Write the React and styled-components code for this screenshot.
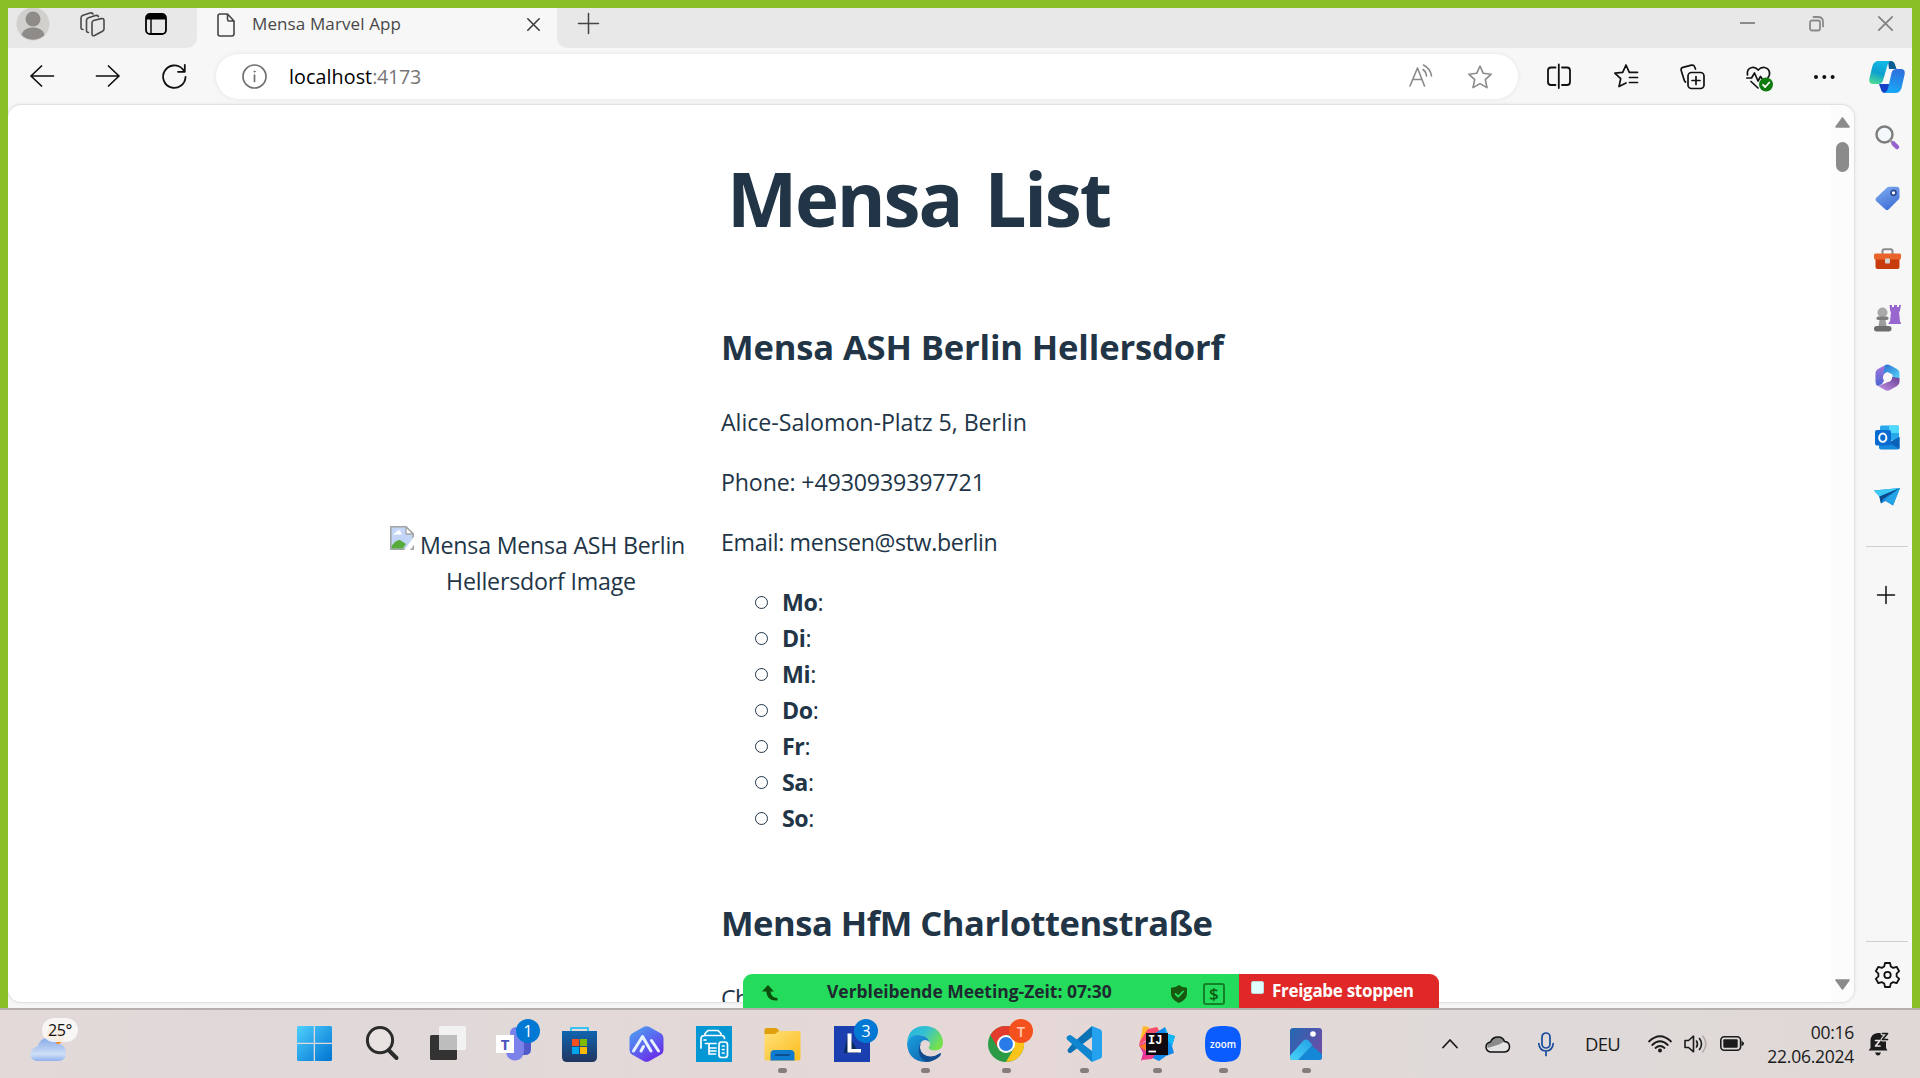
import React from "react";
import styled, { createGlobalStyle } from "styled-components";

const Global = createGlobalStyle`
  * { box-sizing: border-box; }
  html, body { margin: 0; padding: 0; overflow: hidden; }
  body { font-family: "Open Sans", "Noto Sans", sans-serif; }
  svg { display: block; overflow: visible; flex: none; }
`;

const Desktop = styled.div`
  width: 1920px;
  height: 1078px;
  display: flex;
  flex-direction: column;
  overflow: hidden;
  background: #e0d9d8;
`;
const ShareFrame = styled.div`
  position: relative;
  height: 1008px;
  flex: none;
  border: 8px solid #8bbf26;
  border-bottom: 0;
  display: flex;
  flex-direction: column;
  background: #f7f7f7;
`;
const TitleBar = styled.div`
  height: 40px;
  flex: none;
  display: flex;
  background: #f7f7f7;
`;
const TitleLeft = styled.div`
  width: 189px;
  background: #e8e8e8;
  border-bottom-right-radius: 10px;
  display: flex;
  align-items: flex-start;
  overflow: hidden;
`;
const Tab = styled.div`
  width: 360px;
  display: flex;
  align-items: flex-start;
`;
const TitleRight = styled.div`
  flex: 1;
  background: #e8e8e8;
  border-bottom-left-radius: 10px;
  display: flex;
  align-items: flex-start;
`;
const Slot = styled.div`
  margin-left: ${(p) => p.$left || 0}px;
  margin-top: ${(p) => p.$top || 0}px;
  margin-right: ${(p) => p.$right || 0}px;
  flex: none;
`;
const Label = styled.span`
  flex: none;
  display: block;
  white-space: pre;
  font-size: ${(p) => p.$size}px;
  line-height: ${(p) => p.$lh}px;
  font-weight: ${(p) => p.$weight || 400};
  letter-spacing: ${(p) => p.$ls || 0}px;
  color: ${(p) => p.$color || "#1b1b1b"};
  margin-left: ${(p) => p.$left || 0}px;
  margin-top: ${(p) => p.$top || 0}px;
`;
const ToolBar = styled.div`
  height: 57px;
  flex: none;
  display: flex;
  align-items: flex-start;
`;
const AddressBar = styled.div`
  margin: 6px 0 0 29px;
  width: 1302px;
  height: 45px;
  flex: none;
  border-radius: 23px;
  background: #fff;
  box-shadow: 0 0 5px rgba(0, 0, 0, 0.08);
  display: flex;
  align-items: flex-start;
`;
const Body = styled.div`
  flex: 1;
  min-height: 0;
  display: flex;
  overflow-x: clip;
`;
const WebView = styled.div`
  width: 1846px;
  height: 897px;
  flex: none;
  background: #fff;
  border-radius: 13px;
  box-shadow: 0 0 0 1px #e2e2e2, 0 0 4px rgba(0, 0, 0, 0.12);
  display: flex;
  overflow: hidden;
`;
const Page = styled.div`
  flex: 1;
  height: 897px;
  padding-top: 51px;
  overflow: hidden;
  color: #213547;
`;
const ScrollTrack = styled.div`
  width: 23px;
  background: #fcfcfc;
  display: flex;
  flex-direction: column;
  align-items: center;
  padding: 12px 0 12px;
`;
const Thumb = styled.div`
  width: 13px;
  height: 30px;
  border-radius: 7px;
  background: #8b8b8b;
  margin: 14px 0 auto;
`;
const PageTitle = styled.h1`
  margin: 0 0 80px 719px;
  font-size: 74.5px;
  line-height: 84px;
  font-weight: 700;
  letter-spacing: -2.2px;
  word-spacing: 6px;
  white-space: nowrap;
`;
const Item = styled.div`
  display: grid;
  grid-template-columns: 295px 800px;
  column-gap: 36px;
  padding-left: 382px;
  align-items: start;
  margin-bottom: 60px;
`;
const Missing = styled.div`
  padding-top: ${(p) => p.$top}px;
  display: flex;
  flex-direction: column;
  align-items: center;
`;
const MissingLine = styled.div`
  display: flex;
  align-items: flex-start;
  height: 36px;
  padding-left: ${(p) => p.$pad || 0}px;
`;
const MensaName = styled.h2`
  margin: 0 0 30px;
  font-size: 34.6px;
  line-height: 54px;
  font-weight: 700;
  letter-spacing: ${(p) => p.$ls}px;
  white-space: nowrap;
`;
const Line = styled.p`
  margin: 0 0 24px;
  font-size: 23.2px;
  line-height: 36px;
  letter-spacing: ${(p) => p.$ls}px;
  white-space: nowrap;
`;
const Days = styled.ul`
  margin: 0;
  padding: 0 0 0 34px;
  list-style: none;
`;
const Day = styled.li`
  display: flex;
  align-items: center;
  height: 36px;
  font-size: 23.2px;
  line-height: 36px;
  letter-spacing: -0.4px;
  &::before {
    content: "";
    width: 11px;
    height: 11px;
    border: 1px solid #213547;
    border-radius: 50%;
    margin-right: 14px;
  }
`;
const Sidebar = styled.div`
  flex: 1;
  display: flex;
  flex-direction: column;
  align-items: center;
  padding: 19px 0 0 8px;
`;
const SideIcon = styled.div`
  height: 26px;
  margin-bottom: ${(p) => p.$gap}px;
  display: flex;
  align-items: center;
  justify-content: center;
`;
const Divider = styled.div`
  width: 42px;
  height: 1px;
  flex: none;
  background: #cfcfcf;
`;
const ShareBanner = styled.div`
  position: absolute;
  left: 735px;
  bottom: 0;
  width: 696px;
  height: 34px;
  display: flex;
  border-radius: 9px 9px 0 0;
  overflow: hidden;
`;
const BannerPart = styled.div`
  width: ${(p) => p.$w}px;
  background: ${(p) => p.$bg};
  display: flex;
  align-items: flex-start;
`;
const CheckBox = styled.div`
  width: 13px;
  height: 13px;
  border-radius: 2px;
  background: #dffcff;
  border: 1px solid #bfd9dc;
  margin: 7px 0 0 12px;
`;
const TaskBar = styled.div`
  height: 70px;
  flex: none;
  border-top: 2px solid #b5afae;
  background: linear-gradient(90deg, #e2d9d8 0%, #e0d8d9 18%, #e2d9d8 30%, #e6d8d6 48%, #e4d8d6 60%, #dfdad9 76%, #dfd8d7 100%);
  display: flex;
  align-items: flex-start;
`;
const TaskItem = styled.div`
  position: relative;
  flex: none;
  width: ${(p) => p.$w || 36}px;
  height: 62px;
  padding-top: 16px;
  margin-left: ${(p) => p.$left || 0}px;
  display: flex;
  flex-direction: column;
  align-items: center;
  &::after {
    content: "";
    display: ${(p) => (p.$open ? "block" : "none")};
    width: 9px;
    height: 5px;
    border-radius: 3px;
    background: #857d7c;
    margin-top: 6px;
    flex: none;
  }
`;
const Badge = styled.span`
  position: absolute;
  top: 9px;
  left: ${(p) => p.$x}px;
  width: 24px;
  height: 24px;
  border-radius: 50%;
  background: ${(p) => p.$bg || "#0078d4"};
  color: ${(p) => p.$fg || "#fff"};
  font-size: ${(p) => p.$size || 16.5}px;
  font-weight: ${(p) => p.$weight || 400};
  line-height: 24px;
  text-align: center;
`;
const Weather = styled.div`
  width: 48px;
  height: 62px;
  margin-left: 30px;
  padding-top: 8px;
  position: relative;
  flex: none;
`;
const Temp = styled.span`
  position: absolute;
  left: 12px;
  top: 8px;
  width: 36px;
  height: 24px;
  border-radius: 12px;
  background: rgba(250, 248, 248, 0.9);
  font-size: 16px;
  line-height: 25px;
  text-align: center;
  letter-spacing: -0.4px;
  color: #111;
`;
const Clock = styled.div`
  width: 110px;
  margin-top: 10px;
  display: flex;
  flex-direction: column;
  align-items: flex-end;
`;

/* line icons */
const Svg = ({ w, h = w, vb, children, ...r }) => (
  <svg width={w} height={h} viewBox={vb || `0 0 ${w} ${h}`} fill="none" strokeLinecap="round" strokeLinejoin="round" {...r}>
    {children}
  </svg>
);
const Avatar = () => (
  <Svg w={34}>
    <circle cx="17" cy="17" r="16.5" fill="#d2d0cd" />
    <circle cx="17" cy="12" r="7.5" fill="#8e8b88" />
    <path d="M5.5 28C7 22.5 11.5 20.5 17 20.5S27 22.5 28.500 28A16.500 16.500 0 0 1 5.500 28Z" fill="#8e8b88" />
  </Svg>
);
const Workspaces = () => (
  <Svg w={25} stroke="#4a4a4a" strokeWidth="1.6">
    <path d="M13.500 8.500L21 6.600Q24 6 24 8.500V17Q24 18.500 22.500 19.200L14.500 23.500Q12 24.300 12 22V11Q12 9 13.500 8.500Z" />
    <path d="M8.500 20.500Q6.500 20.500 6.500 18.500V8.500Q6.500 6.500 8.500 5.800L15.500 3.500Q17.500 3 18.500 4.500" />
    <path d="M3 17.500Q1 17.500 1 15.500V6Q1 4 3 3.300L10 1Q12 .5 13 2" />
  </Svg>
);
const TabActions = () => (
  <Svg w={22}>
    <rect x="1" y="1" width="20" height="20" rx="4" stroke="#000" strokeWidth="1.8" />
    <path d="M1 6.500V4.500Q1 1 4.500 1H17.500Q21 1 21 4.500V6.500Z" fill="#000" />
    <path d="M6 6V21" stroke="#000" strokeWidth="1.4" />
  </Svg>
);
const Doc = () => (
  <Svg w={18} h={24} stroke="#444" strokeWidth="1.6">
    <path d="M3 1H10.500L17 8V20.500Q17 23 15 23H3Q1 23 1 21V3Q1 1 3 1ZM10.500 1V6.500Q10.500 8 12 8H17" />
  </Svg>
);
const Cross = ({ s, c, sw }) => (
  <Svg w={s} stroke={c} strokeWidth={sw}>
    <path d={`M.8 .8L${s - 0.8} ${s - 0.8}M${s - 0.8} .8L.8 ${s - 0.8}`} />
  </Svg>
);
const Plus = ({ s, c }) => (
  <Svg w={s} stroke={c} strokeWidth="1.5">
    <path d={`M${s / 2} .5V${s - 0.5}M.5 ${s / 2}H${s - 0.5}`} />
  </Svg>
);
const Arrow = ({ flip }) => (
  <Svg w={24} h={22} stroke="#111" strokeWidth="1.7">
    <path d={flip ? "M12.500 1L23 11L12.500 21M23 11H.5" : "M11.500 1L1 11L11.500 21M1 11H23.500"} />
  </Svg>
);
const Reload = () => (
  <Svg w={25} h={25} stroke="#111" strokeWidth="1.8">
    <path d="M23.500 13A11.200 11.200 0 1 1 20.500 5L22.500 7.500M22.800 1V7.800H16" />
  </Svg>
);
const Info = () => (
  <Svg w={25} stroke="#707070" strokeWidth="1.7">
    <circle cx="12.500" cy="12.500" r="11.500" />
    <path d="M12.500 11V17.500" />
    <circle cx="12.500" cy="7.600" r=".6" fill="#707070" strokeWidth="1" />
  </Svg>
);
const ReadAloud = () => (
  <Svg w={24} h={23} stroke="#8a8a8a" strokeWidth="1.6">
    <path d="M1 22L8.500 4L15.500 22M3.500 15.500H13" />
    <path d="M14 5.500Q17 7.500 17.500 12M14.500 1Q21.500 4.500 22.500 12" />
  </Svg>
);
const Star = ({ c }) => (
  <Svg w={24} stroke={c} strokeWidth="1.6">
    <path d="M12 1L15.300 8.300L23.200 9.200L17.300 14.600L19 22.600L12 18.600L5 22.600L6.700 14.600L.8 9.200L8.700 8.300Z" />
  </Svg>
);
const Split = () => (
  <Svg w={24} stroke="#111" strokeWidth="1.8">
    <path d="M8.500 3.500H4Q1 3.500 1 6.500V18Q1 21 4 21H8.500M15 3.500H20Q23 3.500 23 6.500V18Q23 21 20 21H15M11.800 .5V24" />
  </Svg>
);
const Favorites = () => (
  <Svg w={25} h={24} stroke="#111" strokeWidth="1.7">
    <path d="M12 19L5 22.600L6.700 14.600L.8 9.200L8.700 8.300L12 1L15.300 8.300H23.500M15.500 13.500H23.500M15.500 18.500H23.500" />
  </Svg>
);
const Collections = () => (
  <Svg w={25} h={25} stroke="#111" strokeWidth="1.7">
    <rect x="8" y="8.500" width="16" height="16" rx="3.500" />
    <path d="M16 12.500V20.500M12 16.500H20M15.500 5L14.600 2.800Q13.800 .7 11.500 1.200L3 3.300Q.6 4 1.200 6.500L4 15.500Q4.500 17.500 5.500 18" />
  </Svg>
);
const Heart = () => (
  <Svg w={27} h={26} stroke="#111" strokeWidth="1.7">
    <path d="M1.500 9Q.5 2.500 6 1.500Q9.500 1 12.200 4Q15 1 18.500 1.500Q24 2.500 23.500 8.500Q23.300 10 22 11.500M.8 12H5.500L8.500 7L12 15L14.500 10.500L16 12.500M5 15.500L12 22" />
    <circle cx="20" cy="18.500" r="7" fill="#107c10" stroke="none" />
    <path d="M17 18.800L19.200 21L23.300 16.500" stroke="#fff" strokeWidth="1.8" />
  </Svg>
);
const Dots = () => (
  <Svg w={21} h={4}>
    <g fill="#111"><circle cx="2" cy="2" r="2" /><circle cx="10.300" cy="2" r="2" /><circle cx="18.600" cy="2" r="2" /></g>
  </Svg>
);
const Copilot = () => (
  <Svg w={36} h={33}>
    <defs>
      <linearGradient id="cpA" x1="0.500" y1="0" x2="0.200" y2="1"><stop offset="0" stopColor="#12b9e6" /><stop offset=".5" stopColor="#0c9fd0" /><stop offset="1" stopColor="#4fdd92" /></linearGradient>
      <linearGradient id="cpB" x1="0.600" y1="0" x2="0.400" y2="1"><stop offset="0" stopColor="#2f6fdc" /><stop offset="1" stopColor="#18a9f7" /></linearGradient>
    </defs>
    <path d="M19 1H22Q25 1 26 4.500L27.500 9H20Z" fill="#0b5c92" />
    <path d="M10 24L12.500 31Q13.500 33 16 33H18L22 24Z" fill="#1440c8" />
    <path d="M9.500 1H21.500Q19.500 2 18.500 5L14 20.500Q12.800 24 9.500 24H4Q-.5 24 .3 19L3.300 6.500Q4.800 1 9.500 1Z" fill="url(#cpA)" />
    <path d="M26.500 33H15.500Q18 32 19 28.500L22.500 13Q23.500 9 27.500 9H31.500Q36.500 9 35.700 14L32.500 28Q31 33 26.500 33Z" fill="url(#cpB)" />
    <path d="M18.500 9.500H21.500L17.500 23.500H14.500Z" fill="#f7f7f7" />
  </Svg>
);
const Restore = () => (
  <Svg w={15} stroke="#8a8a8a" strokeWidth="1.8">
    <rect x="1" y="4.500" width="10" height="10" rx="2" />
    <path d="M4.500 1H9Q14 1 14 6V10.500" />
  </Svg>
);

/* sidebar */
const SideSearch = () => (
  <Svg w={25}>
    <circle cx="9.500" cy="9.500" r="8" stroke="#7d7d7d" strokeWidth="2.400" fill="#f3f8fa" />
    <path d="M14.800 14.800L17.500 17.500" stroke="#999" strokeWidth="2.400" />
    <path d="M18.500 18.500L22 22" stroke="#9563cf" strokeWidth="4.500" />
  </Svg>
);
const Tag = () => (
  <Svg w={25}>
    <defs><linearGradient id="tg" x1="0" y1="0" x2=".5" y2="1"><stop stopColor="#82b0f2" /><stop offset="1" stopColor="#4171d6" /></linearGradient></defs>
    <path d="M12 1.500Q13 .8 14 .8H21.500Q24.500 .8 24.500 3.800V11.500Q24.500 12.500 23.500 13.500L13.500 23.500Q12 25 10.500 23.500L1 15Q0 13.500 1 12Z" fill="url(#tg)" />
    <circle cx="18.500" cy="6.800" r="2.500" stroke="#2d4a94" strokeWidth="1.700" fill="#fff" />
  </Svg>
);
const Toolbox = () => (
  <Svg w={27} h={21}>
    <path d="M8.500 6V3Q8.500 1.200 10.500 1.200H16.500Q18.500 1.200 18.500 3V6" stroke="#8b8b8b" strokeWidth="2" />
    <rect x="1.500" y="9" width="24" height="12" rx="2" fill="#c83c0c" />
    <rect x="0" y="5.500" width="27" height="6" rx="1.500" fill="#e8642a" />
    <rect x="11" y="10.500" width="5" height="5" rx="1" fill="#d4d4d4" />
  </Svg>
);
const Chess = () => (
  <Svg w={27} h={28}>
    <path d="M15.500 1H18V3H20V1H23V3H25V1H27L25.800 7.500H25L26 17.500Q27 18 27 20H14.500Q14.500 18 16 17.500L17 7.500H16.200Z" fill="#9767cf" />
    <circle cx="8.500" cy="8.500" r="5" fill="#a9a9a9" />
    <rect x="2.500" y="12.500" width="12" height="3.500" rx="1.700" fill="#7d7d7d" />
    <path d="M5.500 16H11.500L12.500 22H4.500Z" fill="#9c9c9c" />
    <rect x="0" y="22" width="17.500" height="5.500" rx="2.700" fill="#6d6d6d" />
  </Svg>
);
const M365 = () => (
  <Svg w={25} h={27}>
    <defs>
      <linearGradient id="m1" x1="0" y1="0" x2="0" y2="1"><stop stopColor="#a774df" /><stop offset="1" stopColor="#4b66cf" /></linearGradient>
      <linearGradient id="m2" x1="0" y1="0" x2="1" y2="1"><stop stopColor="#2c6fcf" /><stop offset="1" stopColor="#54d3fa" /></linearGradient>
      <linearGradient id="m3" x1="0" y1="1" x2="1" y2="0"><stop stopColor="#c293e8" /><stop offset="1" stopColor="#6a3f94" /></linearGradient>
    </defs>
    <path d="M9.500 1.500L3 5Q.5 6.500 .5 9V18Q.5 21 3 22L7 20L9.500 16V9Z" fill="url(#m1)" />
    <path d="M9.500 1.500Q12.500 -.5 15.500 1.500L22 5Q24.500 6.500 24.500 9V14L17.500 14V10.500L12.500 8L8.500 10Z" fill="url(#m2)" />
    <path d="M24.500 14V18Q24.500 20.500 22 22L15.500 25.800Q12.500 27.500 9.500 25.800L3 22L12 18.500L17 13Z" fill="url(#m3)" />
    <circle cx="12.500" cy="13.500" r="4.600" fill="#f8f8f8" />
  </Svg>
);
const Outlook = () => (
  <Svg w={25} h={25}>
    <rect x="5" y="0.500" width="19" height="15" rx="1.500" fill="#28a8ea" />
    <path d="M14 .5H22.500Q24 .5 24 2V8H14Z" fill="#50d9ff" />
    <path d="M5 8H14V18H5Z" fill="#0e5fb0" />
    <path d="M24.500 12V22.500Q24.500 24.500 22.500 24.500H6Q4 24.500 4 22.500V13L14 19Z" fill="#1689dc" />
    <path d="M24.500 12V24L13.500 17.500Z" fill="#0a63b8" />
    <rect x="0" y="5" width="16" height="15.500" rx="2" fill="#0a6cd0" />
    <ellipse cx="7.800" cy="12.700" rx="3.600" ry="4.100" stroke="#fff" strokeWidth="2" />
  </Svg>
);
const Plane = () => (
  <Svg w={26} h={18}>
    <path d="M0 2.500L26 0L19 17.500L11.500 13L7 15.500L5 8Z" fill="#1887d9" />
    <path d="M0 2.500L26 0L5.500 8.500Z" fill="#3cc8f4" />
    <path d="M5.500 8.500L26 0L9 11L7 15.500Z" fill="#0c4a8c" />
    <path d="M26 0L11 11.500L19 17.500Z" fill="#24a4e8" />
  </Svg>
);
const Gear = () => (
  <Svg w={25} h={26} stroke="#111" strokeWidth="1.800">
    <path d="M10 1H15L15.800 4.500L18.200 5.900L21.600 4.800L24.200 9.200L21.600 11.600V14.400L24.200 16.800L21.600 21.200L18.200 20.100L15.800 21.500L15 25H10L9.200 21.500L6.800 20.100L3.400 21.200L.8 16.800L3.400 14.400V11.600L.8 9.200L3.400 4.800L6.800 5.900L9.200 4.500Z" />
    <circle cx="12.500" cy="13" r="3.200" />
  </Svg>
);
const Tri = ({ down }) => (
  <Svg w={15} h={11}>
    <path d={down ? "M7.500 10L14 1H1Z" : "M7.500 1L14 10H1Z"} fill="#8b8b8b" stroke="#8b8b8b" strokeWidth="1.600" />
  </Svg>
);
const Broken = () => (
  <Svg w={24}>
    <path d="M.8 .8H16L23.200 8V23.200H.8Z" fill="#c4d6f8" stroke="#a4a4a4" strokeWidth="1.600" />
    <path d="M3.500 8.500Q4 6.500 6 6.500Q7 4 9 4Q11 4.500 11 7Q12.500 7.500 12 8.500Z" fill="#fff" />
    <path d="M1.600 20Q6 13.500 10 14L16 18L13 22.500H1.600Z" fill="#57ab3a" />
    <path d="M16 .8V8H23.200Z" fill="#fff" stroke="#a4a4a4" strokeWidth="1.300" />
    <path d="M24.500 10L14 24.500H19.500L24.500 18Z" fill="#fff" />
  </Svg>
);

/* banner */
const BendArrow = () => (
  <Svg w={16} h={16}><path d="M6 0L12 6.500H8.500Q9 12.500 15.500 13V15.500Q5 16.500 4.200 6.500H0Z" fill="#0c4f0c" /></Svg>
);
const Shield = () => (
  <Svg w={16} h={18}>
    <path d="M8 0Q11 2.500 16 2.800V9Q15.500 15 8 18Q.5 15 0 9V2.800Q5 2.500 8 0Z" fill="#17590f" />
    <path d="M4.500 9L7.200 11.700L12 6.500" stroke="#24dd5b" strokeWidth="1.800" />
  </Svg>
);
const DollarBox = styled.div`
  width: 22px;
  height: 22px;
  margin: 9px 0 0 16px;
  border: 2px solid #14802a;
  border-radius: 3px;
  color: #0e5a12;
  font-size: 17px;
  font-weight: 600;
  line-height: 18px;
  text-align: center;
  flex: none;
`;

/* taskbar */
const CloudSun = () => (
  <Svg w={36} h={50} vb="0 0 36 50">
    <defs><linearGradient id="cl" x1="0" y1="0" x2="0" y2="1"><stop stopColor="#86a9e8" /><stop offset=".7" stopColor="#cfdff6" /><stop offset="1" stopColor="#8fb0ee" /></linearGradient></defs>
    <circle cx="25" cy="18" r="9" fill="#f08a24" />
    <path d="M7 43A7 7 0 0 1 5 29.500Q7 28 8 28Q10 20 18 20Q25 20 27 26Q36 26 36 35Q35.500 43 28 43Z" fill="url(#cl)" />
  </Svg>
);
const Windows = () => (
  <Svg w={35}>
    <defs><linearGradient id="wn" x1="0" y1="0" x2="1" y2="1" gradientUnits="objectBoundingBox"><stop stopColor="#4fd0ff" /><stop offset="1" stopColor="#0073d1" /></linearGradient></defs>
    <path d="M1 0H16.700V16.700H0V1ZM18 0H34L35 1V16.700H18ZM0 18H16.700V35H1L0 34ZM18 18H35V34L34 35H18Z" fill="url(#wn)" />
  </Svg>
);
const TaskSearch = () => (
  <Svg w={33} h={34} stroke="#2b2b2b">
    <circle cx="14" cy="14.200" r="12.600" strokeWidth="3" fill="#e8e2e1" />
    <path d="M23 24.500L30.500 32" strokeWidth="4" />
  </Svg>
);
const TaskView = () => (
  <Svg w={36} h={34}>
    <rect x="0" y="9" width="27" height="25" rx="1.500" fill="#333" />
    <rect x="9" y="0" width="27" height="24" rx="1.500" fill="#f2f2f2" />
    <path d="M9 9H27V24H9Z" fill="#bdbdbd" />
  </Svg>
);
const Teams = () => (
  <Svg w={36} h={36}>
    <circle cx="20" cy="7" r="6" fill="#7b83eb" />
    <path d="M26 12H35V23Q35 29 29 29H24Z" fill="#5059c9" />
    <path d="M10 12H28V25Q27.500 34 19 34.500Q11 34 10 26Z" fill="#7b83eb" />
    <rect x="0" y="9" width="18" height="18" fill="#fff" />
    <text x="9" y="23.800" fontSize="15" fontWeight="700" fill="#4b53bc" textAnchor="middle">T</text>
  </Svg>
);
const Store = () => (
  <Svg w={35} h={36}>
    <defs><linearGradient id="st" x1="0" y1="0" x2="0" y2="1"><stop stopColor="#1065b0" /><stop offset="1" stopColor="#22355f" /></linearGradient></defs>
    <path d="M9 6V2H26V6" stroke="#39c3f2" strokeWidth="2" />
    <path d="M0 5H35V31Q35 36 30 36H5Q0 36 0 31Z" fill="url(#st)" />
    <rect x="10" y="13" width="7" height="7" fill="#f25022" /><rect x="18" y="13" width="7" height="7" fill="#7fba00" />
    <rect x="10" y="21" width="7" height="7" fill="#00a4ef" /><rect x="18" y="21" width="7" height="7" fill="#ffb900" />
  </Svg>
);
const Armoury = () => (
  <Svg w={35} h={36}>
    <defs><linearGradient id="ar" x1="0" y1="0" x2=".7" y2="1"><stop stopColor="#4aa8ee" /><stop offset=".5" stopColor="#5a6cf0" /><stop offset="1" stopColor="#6a2ae8" /></linearGradient></defs>
    <path d="M15 .8Q17.500 -.5 20 .8L32 7.500Q34.500 9 34.500 12V24Q34.500 27 32 28.500L20 35.200Q17.500 36.500 15 35.200L3 28.500Q.5 27 .5 24V12Q.5 9 3 7.500Z" fill="url(#ar)" />
    <path d="M4.500 25L13.500 10.500L22 25M12 25L14.500 20.500M22.500 14.500L29.500 25" stroke="#e6f2ff" strokeWidth="3" />
  </Svg>
);
const Printer = () => (
  <Svg w={36} h={36}>
    <rect width="36" height="36" fill="#0596d4" />
    <g stroke="#fff" strokeWidth="1.700">
      <path d="M9 9V7.500L12 4.500H22L25 7.500V9M5 22V13Q5 9.500 8.500 9.500H25.500Q28.500 9.500 28.500 12.500M8 14H10" />
      <path d="M9.500 17.500H20M13 17.500V28H19.500M14 22H20M14 25H20" />
      <rect x="23" y="16" width="8.500" height="15.500" rx="2.500" />
      <path d="M26.500 20H28M26.500 23.500H28M26.500 27H28" />
    </g>
  </Svg>
);
const Folder = () => (
  <Svg w={37} h={36}>
    <defs><linearGradient id="fo" x1="0" y1="0" x2="1" y2="1"><stop stopColor="#ffe07a" /><stop offset="1" stopColor="#fcbc1c" /></linearGradient></defs>
    <path d="M.5 4Q.5 2 2.500 2H11Q12.500 2 13.500 3L15.500 5L12 9H.5Z" fill="#e09f0c" />
    <path d="M.5 8H11L15 5H34.500Q36.500 5 36.500 7V32.500Q36.500 34.500 34.500 34.500H2.500Q.5 34.500 .5 32.500Z" fill="url(#fo)" />
    <path d="M6.500 34.500V28Q6.500 24 10.500 24H26.500Q30.500 24 30.500 28V34.500Z" fill="#0f7bcf" />
    <path d="M12 29H25" stroke="#0b4f8f" strokeWidth="2" />
  </Svg>
);
const LApp = () => (
  <Svg w={37} h={36}>
    <rect width="36" height="36" fill="#1b3fae" />
    <path d="M14 8L10 26V27H25Z" fill="#0b2a60" />
    <path d="M13.500 7.500H17.500V23H27V26.500H13.500Z" fill="#fff" />
  </Svg>
);
const Edge = () => (
  <Svg w={36}>
    <defs>
      <linearGradient id="e1" x1="0" y1="0" x2="1" y2=".5"><stop stopColor="#27b3dc" /><stop offset=".5" stopColor="#35c1d3" /><stop offset="1" stopColor="#74e04e" /></linearGradient>
      <linearGradient id="e2" x1="0" y1="0" x2="1" y2="1"><stop stopColor="#1ba0e0" /><stop offset="1" stopColor="#0c59a4" /></linearGradient>
    </defs>
    <path d="M0 17Q1.500 0 18 0Q33 .5 36 15Q36.500 24 28 24.500Q22 24.500 21.500 21.500Q23 20 23 17.500Q21 9.500 12 9Q4 9.500 0 17Z" fill="url(#e1)" />
    <path d="M0 18Q2 9 11 9Q20 9 22.500 16Q17 11.500 13.500 17Q11 26 18.500 30Q26 33 34 27Q28 36 18 36Q1.500 35 0 18Z" fill="url(#e2)" />
    <path d="M13.500 17Q11 27 20 30Q27 31.500 33.500 27Q35 28 32 31Q26 36 19.500 35.800Q8 30 13.500 17Z" fill="#104c8f" />
  </Svg>
);
const Chrome = () => (
  <Svg w={36}>
    <circle cx="18" cy="18" r="18" fill="#2b9b48" />
    <path d="M2.400 9A18 18 0 0 1 33.600 9H18L10.200 22.500Z" fill="#e33b2e" />
    <path d="M33.600 9A18 18 0 0 1 18 36L25.800 22.500V9Z" fill="#fcc419" />
    <circle cx="18" cy="18" r="9" fill="#fff" /><circle cx="18" cy="18" r="7" fill="#2a7bea" />
  </Svg>
);
const VsCode = () => (
  <Svg w={36}>
    <path d="M26 0L7 17L2.500 22.500Q.5 24.500 2.500 26.500Q4 27.500 5.500 26.500L26 11Z" fill="#0b72b5" />
    <path d="M1 13.500Q-.5 11 2.500 9.500Q4 8.500 5.500 9.500L26 25V36Z" fill="#0f86cf" />
    <path d="M26 0L34.500 3.500Q36 4.500 36 6V30Q36 31.500 34.500 32.500L26 36Z" fill="#24a2f0" />
  </Svg>
);
const IntelliJ = () => (
  <Svg w={36} h={36}>
    <path d="M4 0L10 1L9 9L1 16Z" fill="#fdb82c" />
    <path d="M9 3L18 1L22 8L8 14L0 19L1 15Z" fill="#fa4b6a" />
    <path d="M0 19L8 15V30L2 35L4 27Z" fill="#e8329c" />
    <path d="M0 20L7 17V25Z" fill="#fc7a24" />
    <path d="M18 6L26 1L29 8L36 10L33 20L35 27L27 30L20 35L7 29V10Z" fill="#1188ec" />
    <path d="M26 1L29 8L36 10L33 20L27 12Z" fill="#14b8f5" />
    <path d="M2 34L9 28H17L13 33Z" fill="#ee3a8c" />
    <rect x="7" y="7" width="22" height="22" fill="#100810" />
    <text x="9" y="18" fontFamily="Liberation Mono" fontSize="12" fontWeight="700" fill="#fff">IJ</text>
    <path d="M9.500 25.500H17" stroke="#fff" strokeWidth="1.800" strokeLinecap="butt" />
  </Svg>
);
const Zoom = () => (
  <Svg w={36}>
    <path d="M18 0C32 0 36 4 36 18S32 36 18 36S0 32 0 18S4 0 18 0Z" fill="#0b5cff" />
    <text x="18" y="21.500" fontSize="11" fontWeight="600" fill="#fff" textAnchor="middle" textLength="26" lengthAdjust="spacingAndGlyphs">zoom</text>
  </Svg>
);
const Photos = () => (
  <Svg w={32} h={36}>
    <defs>
      <linearGradient id="ph" x1="0" y1="0" x2="1" y2=".6"><stop stopColor="#2068b4" /><stop offset="1" stopColor="#6a4ea6" /></linearGradient>
      <linearGradient id="pm" x1="1" y1="0" x2="0" y2="1"><stop stopColor="#22a0e6" /><stop offset="1" stopColor="#4ad8fa" /></linearGradient>
      <clipPath id="pc"><rect x="0" y="2" width="32" height="32" rx="3" /></clipPath>
    </defs>
    <g clipPath="url(#pc)">
      <rect x="0" y="2" width="32" height="32" fill="url(#ph)" />
      <path d="M8 34L20 21.500Q22 19.500 24 21.500L34 30V36H6Z" fill="#1487d6" />
      <path d="M-2 32L13.500 14.500Q16 12.500 18.500 14.500L22.500 19L6 36H-2Z" fill="url(#pm)" />
    </g>
    <circle cx="23" cy="8" r="2.800" fill="#fff" />
  </Svg>
);
const Chevron = () => <Svg w={16} h={9} stroke="#1b1b1b" strokeWidth="1.800"><path d="M1 8.500L8 1L15 8.500" /></Svg>;
const OneDrive = () => (
  <Svg w={24} h={17}>
    <path d="M5.500 16A5 5 0 0 1 4.500 6Q6.500 1 12 1Q17 1 18.500 5.500Q23.500 6 23.500 10.500Q23.500 15.500 18.500 16Z" fill="#e3e3e3" />
    <path d="M1.500 12Q.5 7 4.500 6Q6.500 1 12 1Q17 1 18.500 5.500L13 8.500Z" fill="#8b8b8b" />
    <path d="M5.500 16A5 5 0 0 1 4.500 6Q6.500 1 12 1Q17 1 18.500 5.500Q23.500 6 23.500 10.500Q23.500 15.500 18.500 16Z" stroke="#111" strokeWidth="1.500" />
  </Svg>
);
const Mic = () => (
  <Svg w={16} h={24} stroke="#164a9c" strokeWidth="1.700">
    <rect x="4" y="1" width="8" height="15" rx="4" />
    <path d="M.8 11.500Q1.500 18.800 8 19Q14.500 18.800 15.200 11.500M8 19V23.500" />
  </Svg>
);
const Wifi = () => (
  <Svg w={24} h={18} stroke="#1b1b1b" strokeWidth="1.800">
    <path d="M1 6.500Q12 -4 23 6.500M4.200 10Q12 2.500 19.800 10M7.500 13Q12 9 16.500 13" />
    <circle cx="12" cy="15.500" r="2" fill="#1b1b1b" stroke="none" />
  </Svg>
);
const Volume = () => (
  <Svg w={24} h={18} stroke="#1b1b1b" strokeWidth="1.600">
    <path d="M1 5.500H4.500L9.500 1.200V16.800L4.500 12.500H1Z" />
    <path d="M12.500 6Q14.500 9 12.500 12M15.500 3.500Q19.500 9 15.500 14.500" />
    <path d="M18.800 1Q25 9 18.800 17" stroke="#b3acab" />
  </Svg>
);
const Battery = () => (
  <Svg w={24} h={15}>
    <rect x=".8" y=".8" width="19.800" height="13.400" rx="3.500" stroke="#1b1b1b" strokeWidth="1.600" />
    <rect x="3.300" y="3.300" width="14.400" height="8.400" rx="1" fill="#1b1b1b" />
    <path d="M21.500 5V10Q24 9.500 24 7.500T21.500 5Z" fill="#1b1b1b" />
  </Svg>
);
const Bell = () => (
  <Svg w={22} h={24}>
    <path d="M2.500 16V9Q2.500 1.500 10 1H13L18 8V16L19.500 18.500H.5Z" fill="#1b1b1b" />
    <path d="M7 20.500H13Q12 23.500 10 23.500T7 20.500Z" fill="#1b1b1b" />
    <path d="M7.500 8.500H12L7.500 14H12" stroke="#e6e0df" strokeWidth="1.700" />
    <path d="M14.500 1.500H19.500L14.500 7.500H19.500" stroke="#dfd8d7" strokeWidth="4" />
    <path d="M14.500 1.500H19.500L14.500 7.500H19.500" stroke="#1b1b1b" strokeWidth="1.700" />
  </Svg>
);

const days = ["Mo", "Di", "Mi", "Do", "Fr", "Sa", "So"];
const sideIcons = [
  [SideSearch, 35], [Tag, 34], [Toolbox, 34], [Chess, 33], [M365, 34], [Outlook, 34], [Plane, 36],
];

export default function App() {
  return (
    <Desktop>
      <Global />
      <ShareFrame>
        <TitleBar>
          <TitleLeft>
            <Slot $left={8} $top={-1}><Avatar /></Slot>
            <Slot $left={30} $top={4}><Workspaces /></Slot>
            <Slot $left={40} $top={5}><TabActions /></Slot>
          </TitleLeft>
          <Tab>
            <Slot $left={20} $top={5}><Doc /></Slot>
            <Label $size={17} $lh={24} $left={17} $top={4} $color="#484848" $ls={0.12}>Mensa Marvel App</Label>
            <Slot $left={126} $top={10}><Cross s={13} c="#3c3c3c" sw={1.6} /></Slot>
          </Tab>
          <TitleRight>
            <Slot $left={21} $top={5}><Plus s={21} c="#444" /></Slot>
            <Slot $left={1141} $top={14}><Svg w={15} h={2}><rect width="15" height="2" fill="#8a8a8a" /></Svg></Slot>
            <Slot $left={54} $top={8}><Restore /></Slot>
            <Slot $left={54} $top={8}><Cross s={15} c="#808080" sw={1.7} /></Slot>
          </TitleRight>
        </TitleBar>
        <ToolBar>
          <Slot $left={22} $top={17}><Arrow /></Slot>
          <Slot $left={42} $top={17}><Arrow flip /></Slot>
          <Slot $left={42} $top={16}><Reload /></Slot>
          <AddressBar>
            <Slot $left={26} $top={10}><Info /></Slot>
            <Label $size={19.7} $lh={28} $left={22} $top={9} $color="#000" $ls={0.08}>localhost</Label>
            <Label $size={19.7} $lh={28} $top={9} $color="#767676" $ls={-0.3}>:4173</Label>
            <Slot $left={988} $top={10}><ReadAloud /></Slot>
            <Slot $left={35} $top={11}><Star c="#8a8a8a" /></Slot>
          </AddressBar>
          <Slot $left={29} $top={16}><Split /></Slot>
          <Slot $left={43} $top={16}><Favorites /></Slot>
          <Slot $left={41} $top={16}><Collections /></Slot>
          <Slot $left={41} $top={18}><Heart /></Slot>
          <Slot $left={41} $top={27}><Dots /></Slot>
          <Slot $left={34} $top={12}><Copilot /></Slot>
        </ToolBar>
        <Body>
          <WebView>
            <Page>
              <PageTitle>Mensa List</PageTitle>
              <Item>
                <Missing $top={206}>
                  <MissingLine>
                    <Broken />
                    <Label $size={23.2} $lh={36} $left={6} $top={1} $color="#213547" $ls={-0.22}>Mensa Mensa ASH Berlin</Label>
                  </MissingLine>
                  <MissingLine $pad={7}>
                    <Label $size={23.2} $lh={36} $top={1} $color="#213547" $ls={-0.2}>Hellersdorf Image</Label>
                  </MissingLine>
                </Missing>
                <div>
                  <MensaName $ls={-0.15}>Mensa ASH Berlin Hellersdorf</MensaName>
                  <Line $ls={-0.04}>Alice-Salomon-Platz 5, Berlin</Line>
                  <Line $ls={-0.16}>Phone: +4930939397721</Line>
                  <Line $ls={-0.35}>Email: mensen@stw.berlin</Line>
                  <Days>
                    {days.map((d) => <Day key={d}><b>{d}</b>:</Day>)}
                  </Days>
                </div>
              </Item>
              <Item>
                <span />
                <div>
                  <MensaName $ls={-0.5}>Mensa HfM Charlottenstraße</MensaName>
                  <Line $ls={-0.6}>Ch</Line>
                </div>
              </Item>
            </Page>
            <ScrollTrack>
              <Tri />
              <Thumb />
              <Tri down />
            </ScrollTrack>
          </WebView>
          <Sidebar>
            {sideIcons.map(([I, g], i) => <SideIcon key={i} $gap={g}><I /></SideIcon>)}
            <Divider />
            <Slot $top={39} $right={2}><Plus s={18} c="#111" /></Slot>
            <Slot $top={337}><Divider /></Slot>
            <Slot $top={20}><Gear /></Slot>
          </Sidebar>
        </Body>
        <ShareBanner>
          <BannerPart $w={496} $bg="#24db5b">
            <Slot $left={19} $top={11}><BendArrow /></Slot>
            <Label $size={17.5} $lh={24} $weight={700} $left={49} $top={5} $color="#1e2a30" $ls={-0.03}>Verbleibende Meeting-Zeit: 07:30</Label>
            <Slot $left={59} $top={11}><Shield /></Slot>
            <DollarBox>$</DollarBox>
          </BannerPart>
          <BannerPart $w={200} $bg="#e02828">
            <CheckBox />
            <Label $size={17} $lh={24} $weight={700} $left={8} $top={5} $color="#fff" $ls={-0.3}>Freigabe stoppen</Label>
          </BannerPart>
        </ShareBanner>
      </ShareFrame>
      <TaskBar>
        <Weather><CloudSun /><Temp>25°</Temp></Weather>
        <TaskItem $left={219} $w={35}><Windows /></TaskItem>
        <TaskItem $left={34} $w={33}><TaskSearch /></TaskItem>
        <TaskItem $left={31} $w={36}><TaskView /></TaskItem>
        <TaskItem $left={30}><Teams /><Badge $x={20}>1</Badge></TaskItem>
        <TaskItem $left={30} $w={35}><Store /></TaskItem>
        <TaskItem $left={32} $w={35}><Armoury /></TaskItem>
        <TaskItem $left={32}><Printer /></TaskItem>
        <TaskItem $left={32} $open><Folder /></TaskItem>
        <TaskItem $left={34}><LApp /><Badge $x={20}>3</Badge></TaskItem>
        <TaskItem $left={37} $open><Edge /></TaskItem>
        <TaskItem $left={45} $open><Chrome /><Badge $x={21} $bg="#f4511e" $fg="#ffc9b5" $weight={600} $size={15}>T</Badge></TaskItem>
        <TaskItem $left={42} $open><VsCode /></TaskItem>
        <TaskItem $left={37} $open><IntelliJ /></TaskItem>
        <TaskItem $left={30} $open><Zoom /></TaskItem>
        <TaskItem $left={49} $w={32} $open><Photos /></TaskItem>
        <Slot $left={120} $top={29}><Chevron /></Slot>
        <Slot $left={28} $top={26}><OneDrive /></Slot>
        <Slot $left={28} $top={22}><Mic /></Slot>
        <Label $size={18.5} $lh={26} $left={31} $top={21} $ls={-0.7}>DEU</Label>
        <Slot $left={28} $top={25}><Wifi /></Slot>
        <Slot $left={12} $top={25}><Volume /></Slot>
        <Slot $left={12} $top={26}><Battery /></Slot>
        <Clock>
          <Label $size={17.5} $lh={24} $ls={-0.25}>00:16</Label>
          <Label $size={17.5} $lh={24} $ls={-0.25}>22.06.2024</Label>
        </Clock>
        <Slot $left={14} $top={22}><Bell /></Slot>
      </TaskBar>
    </Desktop>
  );
}
